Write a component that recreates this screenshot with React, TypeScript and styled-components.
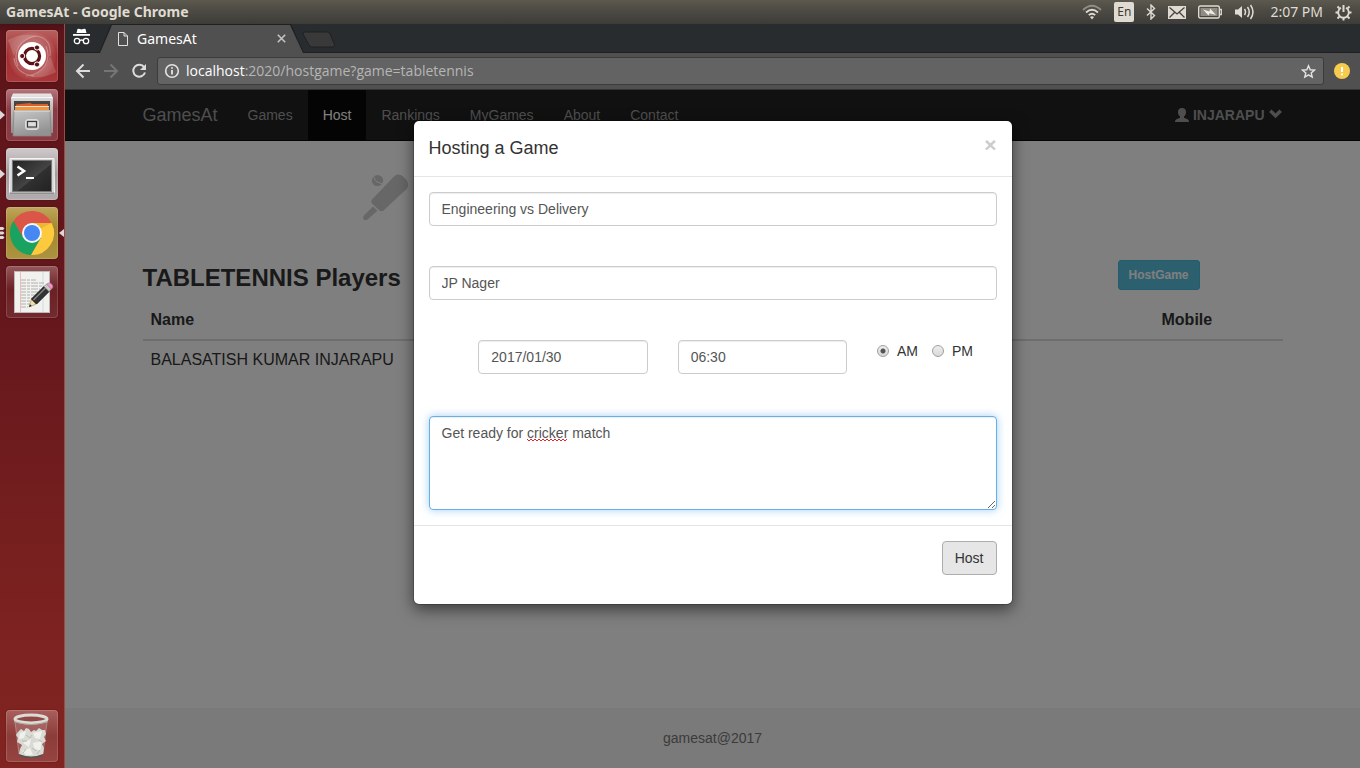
import React, { useState } from "react";
import styled, { createGlobalStyle, css } from "styled-components";

const GlobalStyle = createGlobalStyle`
  *, *::before, *::after { box-sizing: border-box; }
  body {
    margin: 0;
    font-family: "Liberation Sans", Arial, sans-serif;
    font-size: 14px;
    line-height: 20px;
    color: #333;
  }
  button, input, textarea { font: inherit; margin: 0; }
  svg { display: block; flex: none; }
`;

const uiFont = css`
  font-family: "Noto Sans", "Open Sans", sans-serif;
`;

/* ---------- Desktop ---------- */

const Desktop = styled.div`
  display: flex;
  flex-direction: column;
  min-height: 100vh;
`;

const PanelBar = styled.header`
  ${uiFont}
  display: flex;
  align-items: center;
  justify-content: space-between;
  height: 24px;
  padding: 0 8px 0 6px;
  color: #dfdbd2;
  background: linear-gradient(#5c5a4f, #504e46 30%, #3d3c38);
`;

const WindowTitle = styled.strong`
  font-size: 14px;
`;

const Indicators = styled.div`
  display: flex;
  align-items: center;
  gap: 12px;
  font-size: 14px;
`;

const Clock = styled.span`
  margin-left: 3px;
`;

const Keyboard = styled.span`
  width: 20px;
  height: 20px;
  border-radius: 2px;
  background: #dfdbd2;
  color: #3c3b37;
  font-size: 12px;
  line-height: 20px;
  text-align: center;
`;

const Workspace = styled.div`
  display: flex;
  flex: 1;
`;

const Launcher = styled.nav`
  display: flex;
  flex-direction: column;
  gap: 7px;
  width: 65px;
  flex: none;
  padding: 6px 0 6px 6px;
  border-right: 1px solid #a04a48;
  background: linear-gradient(#4c1015, #5d151a 8px, #65171c 40%, #7c2220 80%, #822421);
`;

const Tile = styled.button<{ $tone: string; $last?: boolean }>`
  position: relative;
  width: 52px;
  height: 52px;
  padding: 0;
  border: 0;
  border-radius: 4px;
  background: ${(p) => p.$tone};
  box-shadow: inset 0 0 0 1px rgba(255, 255, 255, 0.15), 0 0 2px rgba(0, 0, 0, 0.3);
  margin-top: ${(p) => (p.$last ? "auto" : "0")};
`;

const RunningMark = styled.svg<{ $side: "left" | "right" }>`
  position: absolute;
  top: 20px;
  ${(p) => (p.$side === "left" ? "left: -6px;" : "right: -6px;")}
`;

/* ---------- Browser ---------- */

const Browser = styled.div`
  ${uiFont}
  display: flex;
  flex-direction: column;
  flex: 1;
  min-width: 0;
`;

const TabStrip = styled.div`
  display: flex;
  height: 29px;
  padding-left: 7px;
  background: #282c2e;
  border-bottom: 1px solid #1e2122;
`;

const Incognito = styled.svg`
  margin: 4px 8px 0 0;
`;

const TabEdge = styled.div`
  height: 29px;
  background: #1e2122;
  clip-path: polygon(0 100%, 12px 0, calc(100% - 13px) 0, 100% 100%);
`;

const Tab = styled.div`
  display: flex;
  align-items: center;
  gap: 9px;
  width: 205px;
  height: 29px;
  padding: 0 18px 0 19px;
  background: #505050;
  clip-path: polygon(1px 100%, 13px 1px, calc(100% - 14px) 1px, calc(100% - 1px) 100%);
  color: #fff;
  font-size: 14px;
`;

const TabTitle = styled.span`
  flex: 1;
`;

const TabClose = styled.button`
  padding: 0;
  border: 0;
  background: none;
`;

const NewTab = styled.svg`
  margin: 7px 0 0 -2px;
`;

const Toolbar = styled.div`
  display: flex;
  align-items: center;
  gap: 12px;
  height: 37px;
  padding: 0 10px;
  background: #505050;
  border-bottom: 1px solid #353535;
`;

const ToolButton = styled.button`
  padding: 0;
  border: 0;
  background: none;
`;

const AddressBar = styled.div`
  display: flex;
  align-items: center;
  flex: 1;
  gap: 6px;
  height: 28px;
  margin: 0 -2px;
  padding: 0 7px 0 6px;
  border: 1px solid #3c3c3c;
  border-radius: 3px;
  background: #636363;
  font-family: "Open Sans", "Noto Sans", sans-serif;
  font-size: 14px;
  color: #b6b6b6;
`;

const Address = styled.span`
  flex: 1;
`;

const HostName = styled.span`
  color: #fff;
`;

/* ---------- Page ---------- */

const Page = styled.div`
  position: relative;
  display: flex;
  flex-direction: column;
  flex: 1;
  font-family: "Liberation Sans", Arial, sans-serif;
  background: #fff;
`;

const Container = styled.div`
  width: 100%;
  max-width: 1170px;
  margin: 0 auto;
  padding: 0 15px;
`;

const NavBar = styled.nav`
  background: #222;
  border-bottom: 1px solid #080808;
`;

const NavRow = styled(Container)`
  display: flex;
  align-items: center;
`;

const Brand = styled.a`
  margin-right: 15px;
  font-size: 18px;
  color: #9d9d9d;
  text-decoration: none;
`;

const NavLink = styled.a<{ $active?: boolean }>`
  padding: 15px;
  color: ${(p) => (p.$active ? "#fff" : "#9d9d9d")};
  background: ${(p) => (p.$active ? "#080808" : "transparent")};
  text-decoration: none;
`;

const UserMenu = styled.a`
  display: flex;
  align-items: center;
  gap: 4px;
  margin-left: auto;
  font-weight: bold;
  color: #9d9d9d;
  text-decoration: none;
`;

const Main = styled.main`
  flex: 1;
  padding-top: 33px;
`;

const GameIcons = styled.div`
  padding-left: 219px;
`;

const HeadingRow = styled.div`
  display: grid;
  grid-template-columns: 1fr 165px;
  align-items: start;
  margin: 38px 0 5px;
`;

const Heading = styled.h3`
  margin: 0;
  font-size: 24px;
  line-height: 36px;
`;

const InfoButton = styled.button`
  justify-self: start;
  height: 30px;
  padding: 0 10px;
  border: 1px solid #46b8da;
  border-radius: 3px;
  background: #5bc0de;
  color: #fff;
  font-size: 12px;
  font-weight: bold;
`;

const Players = styled.table`
  width: 100%;
  border-collapse: collapse;
  font-size: 16px;
  line-height: 22px;
  th, td { padding: 8px; text-align: left; }
  thead th { border-bottom: 2px solid #ddd; }
  th:last-child { width: 129px; }
`;

const Footer = styled.footer`
  padding: 20px;
  background: #f5f5f5;
  color: #777;
  text-align: center;
`;

/* ---------- Dialog ---------- */

const Backdrop = styled.div`
  position: absolute;
  inset: 0;
  padding: 30px 10px;
  background: rgba(0, 0, 0, 0.5);
`;

const Dialog = styled.form`
  max-width: 600px;
  margin: 0 auto;
  border: 1px solid rgba(0, 0, 0, 0.2);
  border-radius: 6px;
  background: #fff;
  background-clip: padding-box;
  box-shadow: 0 5px 15px rgba(0, 0, 0, 0.5);
`;

const DialogHeader = styled.div`
  display: flex;
  justify-content: space-between;
  align-items: flex-start;
  height: 56px;
  padding: 15px;
  border-bottom: 1px solid #e5e5e5;
`;

const DialogTitle = styled.h4`
  margin: 0;
  font-size: 18px;
  font-weight: normal;
  line-height: 24px;
`;

const CloseButton = styled.button`
  padding: 0;
  border: 0;
  background: none;
  color: #ccc;
  font-size: 21px;
  font-weight: bold;
  line-height: 18px;
`;

const DialogBody = styled.div`
  display: flex;
  flex-direction: column;
  gap: 40px;
  padding: 15px;
`;

const field = css`
  display: block;
  width: 100%;
  padding: 6px 12px;
  border: 1px solid #ccc;
  border-radius: 4px;
  background: #fff;
  color: #555;
  outline: none;
  box-shadow: inset 0 1px 1px rgba(0, 0, 0, 0.075);
`;

const TextField = styled.input`
  ${field}
  height: 34px;
`;

const WhenRow = styled.div`
  display: grid;
  grid-template-columns: 1fr 4fr 4fr 3fr;
  margin: 0 -15px;
`;

const WhenCell = styled.div<{ $first?: boolean }>`
  grid-column-start: ${(p) => (p.$first ? 2 : "auto")};
  padding: 0 15px;
`;

const Choices = styled(WhenCell)`
  display: flex;
  align-items: flex-start;
  gap: 14px;
  padding-right: 0;
`;

const Choice = styled.label`
  display: flex;
  align-items: center;
  gap: 8px;
  line-height: 22px;
`;

const Radio = styled.input`
  appearance: none;
  width: 12px;
  height: 12px;
  border: 1px solid #a0a0a0;
  border-radius: 50%;
  background: linear-gradient(#eee, #d8d8d8);
  &:checked {
    background: radial-gradient(circle, #555 0 2px, transparent 3px), linear-gradient(#eee, #d8d8d8);
  }
`;

const NoteWrap = styled.div`
  position: relative;
  margin-top: 2px;
`;

const Note = styled.textarea`
  ${field}
  height: 94px;
  resize: vertical;
  border-color: #66afe9;
  box-shadow: inset 0 1px 1px rgba(0, 0, 0, 0.075), 0 0 8px rgba(102, 175, 233, 0.6);
`;

const SpellingMark = styled.svg`
  position: absolute;
  left: 98px;
  top: 22px;
  pointer-events: none;
`;

const DialogFooter = styled.div`
  display: flex;
  justify-content: flex-end;
  padding: 15px 15px 29px;
  border-top: 1px solid #e5e5e5;
`;

const HostButton = styled.button`
  height: 34px;
  padding: 0 12px;
  border: 1px solid #adadad;
  border-radius: 4px;
  background: #e6e6e6;
  color: #333;
`;

/* ---------- Drawings ---------- */

const LeftArrow = () => (
  <RunningMark $side="left" width="5" height="12" viewBox="0 0 5 12">
    <path d="M0 1.5 5 6 0 10.5Z" fill="#dcd8d8" />
  </RunningMark>
);

const DashIcon = () => (
  <svg width="52" height="52" viewBox="0 0 52 52">
    <defs>
      <radialGradient id="dash" cx="50%" cy="50%" r="55%">
        <stop offset="0" stopColor="#fff" stopOpacity="0.45" />
        <stop offset="1" stopColor="#fff" stopOpacity="0" />
      </radialGradient>
    </defs>
    <circle cx="26" cy="26" r="24" fill="url(#dash)" />
    <path d="M12 36C6 22 14 9 30 6Q46 8 44 26M40 16C46 30 38 44 20 46M8 28Q10 44 28 46" fill="none" stroke="#f0c8c8" strokeOpacity="0.4" strokeWidth="1.2" />
    <path d="M2 10Q16 2 32 6Q14 8 8 26ZM50 42Q36 50 22 46Q38 44 44 26Z" fill="#fff" fillOpacity="0.16" />
    <circle cx="26" cy="26" r="14" fill="#fff" />
    <circle cx="26" cy="26" r="7.6" fill="none" stroke="#5b1216" strokeWidth="3.2" />
    <g fill="#5b1216" stroke="#fff" strokeWidth="1">
      <circle cx="16.2" cy="26" r="2.6" />
      <circle cx="31" cy="17.5" r="2.6" />
      <circle cx="31" cy="34.5" r="2.6" />
    </g>
  </svg>
);

const FilesIcon = () => (
  <svg width="52" height="52" viewBox="0 0 52 52">
    <defs>
      <linearGradient id="cab" x1="0" y1="0" x2="0" y2="1">
        <stop offset="0" stopColor="#e8e8e8" />
        <stop offset="0.3" stopColor="#c4c4c4" />
        <stop offset="1" stopColor="#8f8f8f" />
      </linearGradient>
      <linearGradient id="drawer" x1="0" y1="0" x2="0.4" y2="1">
        <stop offset="0" stopColor="#c8c8c8" />
        <stop offset="1" stopColor="#929292" />
      </linearGradient>
    </defs>
    <path d="M7 4.500H45L47 9V44H5V9Z" fill="url(#cab)" />
    <path d="M5.500 8.500H46.500" stroke="#f8f8f8" strokeWidth="1" />
    <rect x="8" y="12" width="36" height="11" fill="#4a4545" />
    <path d="M10 15.500 24 14 26 15H42V22H10Z" fill="#d8602a" />
    <rect x="9" y="17" width="34" height="1.4" fill="#ffe2bb" />
    <rect x="9" y="18.500" width="34" height="4" fill="#f0953a" />
    <path d="M8 21.500H44L45 47H7Z" fill="url(#drawer)" stroke="#858585" strokeWidth="0.8" />
    <path d="M8 22H44" stroke="#e4e4e4" />
    <rect x="19.500" y="30.500" width="13" height="10" rx="2.5" fill="#cfcfcf" stroke="#dcdcdc" />
    <rect x="21.5" y="32.5" width="9" height="5.5" fill="#ddd" stroke="#3c3c3c" strokeWidth="1.2" />
  </svg>
);

const TerminalIcon = () => (
  <svg width="52" height="52" viewBox="0 0 52 52">
    <defs>
      <linearGradient id="term" x1="0" y1="0" x2="1" y2="1">
        <stop offset="0" stopColor="#222" />
        <stop offset="0.55" stopColor="#444" />
        <stop offset="0.56" stopColor="#303030" />
        <stop offset="1" stopColor="#222" />
      </linearGradient>
    </defs>
    <path d="M4 10.500H48L48.500 46H3.500Z" fill="#d6d6d6" stroke="#f4f4f4" />
    <rect x="3.500" y="44.500" width="45" height="2" fill="#8f8f8f" />
    <rect x="6.500" y="12.500" width="39" height="31" fill="url(#term)" stroke="#777" />
    <path d="M11.500 18.500 18 23 11.500 27.500" fill="none" stroke="#fff" strokeWidth="2.600" />
    <path d="M20 30H28" stroke="#fff" strokeWidth="2" />
  </svg>
);

const ChromeIcon = () => (
  <svg width="52" height="52" viewBox="0 0 52 52">
    <g transform="translate(26 26)">
      <path d="M-18.46-11.97A22 22 0 0 1 19.6-10L0-10-8.66 5Z" fill="#db5548" />
      <path d="M19.6-10A22 22 0 0 1-1.14 21.97L8.66 5 0-10Z" fill="#fdca3d" />
      <path d="M-1.14 21.97A22 22 0 0 1-18.46-11.97L-8.66 5 8.66 5Z" fill="#1aa260" />
      <path d="M0-10 19.6-10 6-3Z" fill="#c79520" opacity="0.35" />
      <circle r="10" fill="#f6f6f6" />
      <circle r="8" fill="#4587f3" />
    </g>
  </svg>
);

const EditorIcon = () => (
  <svg width="52" height="52" viewBox="0 0 52 52">
    <rect x="8.500" y="5.500" width="35" height="41" fill="#f1f1ee" stroke="#bbb" />
    <path d="M14.500 6V46" stroke="#eab0b0" strokeWidth="0.8" />
    <path d="M37 6V46" stroke="#bcd" strokeWidth="0.6" />
    <path d="M15 14H30M15 17H38M15 20H36M15 23H34M15 26H38M15 29H32M15 32H28M15 35H26M15 38H24M15 41H22" stroke="#b0b0b0" strokeDasharray="5 1 3 1 7 1" strokeWidth="1" />
    <path d="M23 41 25.500 33 30.500 38Z" fill="#f4dfa0" stroke="#776" strokeWidth="0.5" />
    <path d="M23 41 24 38.200 25.800 40Z" fill="#222" />
    <path d="M25.500 33 38 20.500 43 25.500 30.500 38Z" fill="#333" stroke="#111" />
    <path d="M27.500 34 39.500 22" stroke="#888" strokeWidth="1.2" />
    <path d="M38 20.500 40.500 18 45.500 23 43 25.500Z" fill="#ccc" stroke="#777" strokeWidth="0.6" />
    <path d="M40.500 18 42 17.200Q44.500 16.500 46 18.500 47.500 20.500 46.500 22L45.500 23Z" fill="#e99ac4" stroke="#b5709a" strokeWidth="0.6" />
  </svg>
);

const TrashIcon = () => (
  <svg width="52" height="52" viewBox="0 0 52 52">
    <path d="M9 12 13 44Q25 50 37 44L41 12Z" fill="#fff" fillOpacity="0.14" stroke="#ddd" strokeOpacity="0.35" />
    <path d="M12 22 15 19 18 21 20 18 23 19 25 22 28 20 30 21 33 18 36 20 39 20 40 24 38 27 40 31 36 34 38 38 37 44Q25 49 13 44L14 39 16 35 11 32 12 28 10 25Z" fill="#d9dad4" />
    <path d="M14 23 20 21 18 28 13 29ZM27 23 36 21 34 29 29 28ZM17 33 25 29 23 37ZM27 33 36 31 34 41 28 38ZM16 41 24 38 27 45 20 45Z" fill="#f0f1ec" />
    <path d="M20 25 24 28 26 25M16 31 21 31M26 38 30 41M33 30 36 32M17 43 20 39M31 44 34 40" stroke="#b9bab3" fill="none" />
    <path d="M13 45Q25 50 37 45" stroke="#555" strokeWidth="1.6" fill="none" />
    <ellipse cx="25" cy="9" rx="16" ry="4" fill="#8c4643" fillOpacity="0.75" stroke="#dcdcd6" strokeWidth="3" />
    <path d="M8 11.500Q25 17.500 42 11.500" stroke="#a9a89f" fill="none" strokeWidth="1.200" />
  </svg>
);

const PanelIcons = {
  wifi: (
    <svg width="20" height="16" viewBox="0 0 20 16" fill="none" stroke="#dfdbd2" strokeWidth="1.8">
      <path d="M1 6Q10-2.500 19 6" opacity="0.45" />
      <path d="M4 8.500Q10 3 16 8.500M6.800 11.200Q10 8.200 13.200 11.200" />
      <path d="M8 13Q10 11.500 12 13L10 15.500Z" fill="#dfdbd2" stroke="none" />
    </svg>
  ),
  bluetooth: (
    <svg width="10" height="16" viewBox="0 0 10 16" fill="none" stroke="#dfdbd2" strokeWidth="1.400">
      <path d="M1 4.500 8.500 11.500 5 15V1L8.500 4.500 1 11.500" />
    </svg>
  ),
  mail: (
    <svg width="18" height="13" viewBox="0 0 18 13">
      <rect width="18" height="13" fill="#dfdbd2" />
      <path d="M1.500 1.500 9 8 16.500 1.500M1.500 11.500 6.500 6.500M16.500 11.500 11.500 6.500" fill="none" stroke="#45433d" strokeWidth="1.300" />
    </svg>
  ),
  battery: (
    <svg width="24" height="14" viewBox="0 0 24 14">
      <rect x="0.700" y="1" width="20.600" height="12" rx="1.500" fill="none" stroke="#dfdbd2" strokeWidth="1.400" />
      <path d="M21.500 4.500H23.300V9.500H21.500" fill="none" stroke="#dfdbd2" strokeWidth="1.300" />
      <rect x="2.500" y="3" width="17" height="8" fill="#8f8c85" />
      <path d="M5 4.500 11.500 6.500 12 3.500 18 10 11.500 8.200 10.500 10.500Z" fill="#f0ece3" />
    </svg>
  ),
  volume: (
    <svg width="21" height="16" viewBox="0 0 21 16" fill="none" stroke="#dfdbd2" strokeWidth="1.500">
      <path d="M1 5.500H4L8 2V14L4 10.500H1Z" fill="#dfdbd2" stroke="none" />
      <path d="M10.500 5Q12.500 8 10.500 11M13.500 3Q17 8 13.500 13M16.500 1Q21.500 8 16.500 15" />
    </svg>
  ),
  gear: (
    <svg width="17" height="17" viewBox="0 0 17 17" fill="none" stroke="#dfdbd2">
      <path d="M6 3.800A5.300 5.300 0 1 0 11 3.800" strokeWidth="1.800" />
      <path d="M8.500 1V8" strokeWidth="2" />
      <path d="M4.300 4.300 2.500 2.500M3 8.500H0.500M4.300 12.700 2.500 14.500M8.500 14V16.500M12.700 12.700 14.500 14.500M14 8.500H16.500M12.700 4.300 14.500 2.500" strokeWidth="2" />
    </svg>
  ),
};

const CricketIcon = () => (
  <svg width="48" height="48" viewBox="0 0 48 48" fill="#cecece">
    <path d="M31.500 3Q36-1.500 41 2.500L44.500 6Q48 11 44.500 15L21.500 36.500Q19.500 38 17.500 36.500L10 29.500Q8.500 27.500 10 25.500Z" />
    <path d="M11 32.500 15.500 36.800 5.500 45.500Q3.500 47 1.800 45.500 0.500 43.500 1.800 41.500Z" />
    <circle cx="15.500" cy="6.500" r="5.600" />
    <path d="M11.500 1.500Q12.500 9.500 21.500 9.500" fill="none" stroke="#fff" strokeWidth="1" />
  </svg>
);

const FIELDS = { title: "Engineering vs Delivery", venue: "JP Nager", date: "2017/01/30", time: "06:30" };
const LINKS = ["Games", "Host", "Rankings", "MyGames", "About", "Contact"];

export default function App() {
  const [values, setValues] = useState(FIELDS);
  const [period, setPeriod] = useState("AM");
  const [note, setNote] = useState("Get ready for cricker match");
  const bind = (name: keyof typeof FIELDS) => ({
    name,
    value: values[name],
    onChange: (e: React.ChangeEvent<HTMLInputElement>) => setValues({ ...values, [name]: e.target.value }),
  });

  return (
    <Desktop>
      <GlobalStyle />
      <PanelBar>
        <WindowTitle>GamesAt - Google Chrome</WindowTitle>
        <Indicators>
          {PanelIcons.wifi}
          <Keyboard>En</Keyboard>
          {PanelIcons.bluetooth}
          {PanelIcons.mail}
          {PanelIcons.battery}
          {PanelIcons.volume}
          <Clock>2:07 PM</Clock>
          {PanelIcons.gear}
        </Indicators>
      </PanelBar>
      <Workspace>
        <Launcher aria-label="Launcher">
          <Tile $tone="linear-gradient(#b8605f, #a12c2e 50%, #a8383a)" aria-label="Search">
            <DashIcon />
          </Tile>
          <Tile $tone="linear-gradient(#b4767c, #8a3a42 40%, #8c3b43)" aria-label="Files">
            <LeftArrow />
            <FilesIcon />
          </Tile>
          <Tile $tone="linear-gradient(#cfcacc, #a39b9e 50%, #b3adb0)" aria-label="Terminal">
            <LeftArrow />
            <TerminalIcon />
          </Tile>
          <Tile $tone="linear-gradient(#bfa65c, #a3882f 40%, #ac9340)" aria-label="Chrome">
            <RunningMark $side="left" width="5" height="12" viewBox="0 0 5 12">
              <path d="M0 0H3L4.500 1.500 3 3H0ZM0 4.500H3L4.500 6 3 7.500H0ZM0 9H3L4.500 10.500 3 12H0Z" fill="#dcd8d8" />
            </RunningMark>
            <RunningMark $side="right" width="5" height="12" viewBox="0 0 5 12">
              <path d="M5 2 0 6 5 10Z" fill="#dcd8d8" />
            </RunningMark>
            <ChromeIcon />
          </Tile>
          <Tile $tone="linear-gradient(#96585b, #6b2024 45%, #732a2e)" aria-label="Text Editor">
            <EditorIcon />
          </Tile>
          <Tile $tone="linear-gradient(#a95f5c, #8c3c39 50%, #964441)" $last aria-label="Trash">
            <TrashIcon />
          </Tile>
        </Launcher>
        <Browser>
          <TabStrip>
            <Incognito width="19" height="18" viewBox="0 0 19 18">
              <path d="M5.500 1Q7 0.500 9.500 1.500 12 0.500 13.500 1L14.500 5H4.500Z" fill="#fff" />
              <rect x="1" y="6" width="17" height="1.800" fill="#fff" />
              <g fill="none" stroke="#fff" strokeWidth="1.300">
                <circle cx="5" cy="13" r="2.700" />
                <circle cx="14" cy="13" r="2.700" />
                <path d="M7.700 12.500Q9.500 11.500 11.300 12.500" />
              </g>
            </Incognito>
            <TabEdge>
              <Tab>
                <svg width="10" height="14" viewBox="0 0 10 14" fill="none" stroke="#e0e0e0">
                  <path d="M0.500 0.500H6L9.500 4V13.500H0.500ZM6 0.500V4H9.500" />
                </svg>
                <TabTitle>GamesAt</TabTitle>
                <TabClose aria-label="Close tab">
                  <svg width="9" height="9" viewBox="0 0 9 9" stroke="#c4c4c4" strokeWidth="1.600">
                    <path d="M0.800 0.800 8.200 8.200M8.200 0.800 0.800 8.200" />
                  </svg>
                </TabClose>
              </Tab>
            </TabEdge>
            <NewTab width="34" height="17" viewBox="0 0 34 17">
              <path d="M3 1H25Q27 1 28 3L32.500 13.500Q33 16 31 16H10Q8 16 7 14L1 3Q0.500 1 3 1Z" fill="#393939" stroke="#1e2122" />
            </NewTab>
          </TabStrip>
          <Toolbar>
            <ToolButton aria-label="Back">
              <svg width="16" height="16" viewBox="0 0 16 16" fill="none" stroke="#dcdcdc" strokeWidth="2">
                <path d="M15 8H2.500M8.500 1.500 2 8 8.500 14.500" />
              </svg>
            </ToolButton>
            <ToolButton aria-label="Forward">
              <svg width="16" height="16" viewBox="0 0 16 16" fill="none" stroke="#757575" strokeWidth="2">
                <path d="M1 8H13.500M7.500 1.500 14 8 7.500 14.500" />
              </svg>
            </ToolButton>
            <ToolButton aria-label="Reload">
              <svg width="16" height="16" viewBox="0 0 16 16">
                <path d="M13.200 4.200A6 6 0 1 0 14 9.500" fill="none" stroke="#dcdcdc" strokeWidth="2" />
                <path d="M15 1V7H9Z" fill="#dcdcdc" />
              </svg>
            </ToolButton>
            <AddressBar>
              <svg width="16" height="16" viewBox="0 0 16 16" fill="none" stroke="#e4e4e4" strokeWidth="1.600">
                <circle cx="8" cy="8" r="6.300" />
                <path d="M8 7V11.500M8 4.200V5.800" strokeWidth="1.800" />
              </svg>
              <Address>
                <HostName>localhost</HostName>:2020/hostgame?game=tabletennis
              </Address>
              <svg width="15" height="15" viewBox="0 0 15 15" fill="none" stroke="#e4e4e4" strokeWidth="1.400">
                <path d="M7.500 1.800 9.200 5.800 13.500 6.100 10.200 8.900 11.200 13.100 7.500 10.800 3.800 13.100 4.800 8.900 1.500 6.100 5.800 5.800Z" />
              </svg>
            </AddressBar>
            <svg width="16" height="16" viewBox="0 0 16 16">
              <circle cx="8" cy="8" r="8" fill="#f7cb4d" />
              <path d="M8 4V9M8 10.500V12.200" stroke="#fff" strokeWidth="2" />
            </svg>
          </Toolbar>
          <Page>
            <NavBar>
              <NavRow>
                <Brand href="#">GamesAt</Brand>
                {LINKS.map((link) => (
                  <NavLink key={link} href="#" $active={link === "Host"}>
                    {link}
                  </NavLink>
                ))}
                <UserMenu href="#">
                  <svg width="14" height="14" viewBox="0 0 14 14" fill="currentColor">
                    <path d="M7 0C9.500 0 11 1.500 11 4 11 6 10.200 7.500 9 8.500V9.800L13 11.500Q14 12 14 14H0Q0 12 1 11.500L5 9.800V8.500C3.800 7.500 3 6 3 4 3 1.500 4.500 0 7 0Z" />
                  </svg>
                  INJARAPU
                  <svg width="14" height="14" viewBox="0 0 14 14" fill="none" stroke="currentColor" strokeWidth="3.400">
                    <path d="M1.300 2.800 6.500 7.800 11.700 2.800" />
                  </svg>
                </UserMenu>
              </NavRow>
            </NavBar>
            <Main>
              <Container>
                <GameIcons>
                  <CricketIcon />
                </GameIcons>
                <HeadingRow>
                  <Heading>TABLETENNIS Players</Heading>
                  <InfoButton>HostGame</InfoButton>
                </HeadingRow>
                <Players>
                  <thead>
                    <tr>
                      <th>Name</th>
                      <th>Mobile</th>
                    </tr>
                  </thead>
                  <tbody>
                    <tr>
                      <td>BALASATISH KUMAR INJARAPU</td>
                      <td />
                    </tr>
                  </tbody>
                </Players>
              </Container>
            </Main>
            <Footer>gamesat@2017</Footer>
            <Backdrop>
              <Dialog role="dialog" aria-labelledby="host-title" onSubmit={(e) => e.preventDefault()}>
                <DialogHeader>
                  <DialogTitle id="host-title">Hosting a Game</DialogTitle>
                  <CloseButton type="button" aria-label="Close">
                    ×
                  </CloseButton>
                </DialogHeader>
                <DialogBody>
                  <TextField aria-label="Title" {...bind("title")} />
                  <TextField aria-label="Venue" {...bind("venue")} />
                  <WhenRow>
                    <WhenCell $first>
                      <TextField aria-label="Date" {...bind("date")} />
                    </WhenCell>
                    <WhenCell>
                      <TextField aria-label="Time" {...bind("time")} />
                    </WhenCell>
                    <Choices>
                      {["AM", "PM"].map((p) => (
                        <Choice key={p}>
                          <Radio type="radio" name="period" checked={period === p} onChange={() => setPeriod(p)} />
                          {p}
                        </Choice>
                      ))}
                    </Choices>
                  </WhenRow>
                  <NoteWrap>
                    <Note aria-label="Description" value={note} onChange={(e) => setNote(e.target.value)} />
                    <SpellingMark width="42" height="4" viewBox="0 0 42 4">
                      <path
                        d="M0 1 2 3 4 1 6 3 8 1 10 3 12 1 14 3 16 1 18 3 20 1 22 3 24 1 26 3 28 1 30 3 32 1 34 3 36 1 38 3 40 1"
                        fill="none"
                        stroke="#e8262a"
                      />
                    </SpellingMark>
                  </NoteWrap>
                </DialogBody>
                <DialogFooter>
                  <HostButton type="submit">Host</HostButton>
                </DialogFooter>
              </Dialog>
            </Backdrop>
          </Page>
        </Browser>
      </Workspace>
    </Desktop>
  );
}
